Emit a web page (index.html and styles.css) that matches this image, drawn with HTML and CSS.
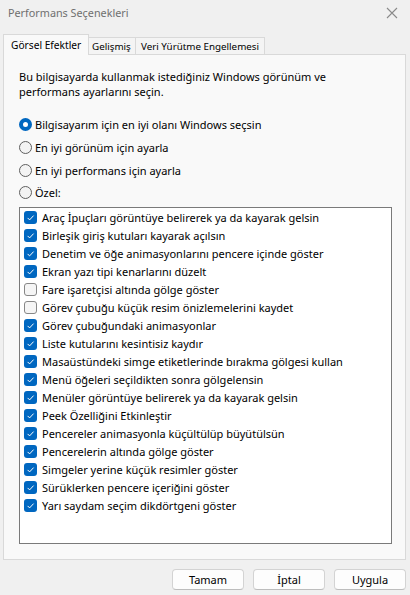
FILE: index.html
```html
<!DOCTYPE html>
<html lang="tr">
<head>
<meta charset="utf-8">
<title>Performans Seçenekleri</title>
<link rel="stylesheet" href="styles.css">
</head>
<body>
<div class="window">
  <div class="titlebar">
    <span class="title">Performans Seçenekleri</span>
    <svg class="close" width="12" height="12" viewBox="0 0 12 12"><path d="M1 1L11 11M11 1L1 11" stroke="#8a8a8a" stroke-width="1.1" fill="none"/></svg>
  </div>
  <div class="tabs">
    <div class="tab active tab-visual">Görsel Efektler</div>
    <div class="tab tab-adv">Gelişmiş</div>
    <div class="tab tab-dep">Veri Yürütme Engellemesi</div>
  </div>
  <div class="panel">
    <p class="desc">Bu bilgisayarda kullanmak istediğiniz Windows görünüm ve performans ayarlarını seçin.</p>
    <div class="radios">
      <div class="radio-row"><span class="radio on"></span><span>Bilgisayarım için en iyi olanı Windows seçsin</span></div>
      <div class="radio-row"><span class="radio"></span><span>En iyi görünüm için ayarla</span></div>
      <div class="radio-row"><span class="radio"></span><span>En iyi performans için ayarla</span></div>
      <div class="radio-row"><span class="radio"></span><span>Özel:</span></div>
    </div>
    <div class="list">
      <div class="item"><span class="cb on"><svg viewBox="0 0 13 13"><path d="M3.6 6.9L5.6 8.9L9.6 4.6"/></svg></span>Araç İpuçları görüntüye belirerek ya da kayarak gelsin</div>
      <div class="item"><span class="cb on"><svg viewBox="0 0 13 13"><path d="M3.6 6.9L5.6 8.9L9.6 4.6"/></svg></span>Birleşik giriş kutuları kayarak açılsın</div>
      <div class="item"><span class="cb on"><svg viewBox="0 0 13 13"><path d="M3.6 6.9L5.6 8.9L9.6 4.6"/></svg></span>Denetim ve öğe animasyonlarını pencere içinde göster</div>
      <div class="item"><span class="cb on"><svg viewBox="0 0 13 13"><path d="M3.6 6.9L5.6 8.9L9.6 4.6"/></svg></span>Ekran yazı tipi kenarlarını düzelt</div>
      <div class="item"><span class="cb"></span>Fare işaretçisi altında gölge göster</div>
      <div class="item"><span class="cb"></span>Görev çubuğu küçük resim önizlemelerini kaydet</div>
      <div class="item"><span class="cb on"><svg viewBox="0 0 13 13"><path d="M3.6 6.9L5.6 8.9L9.6 4.6"/></svg></span>Görev çubuğundaki animasyonlar</div>
      <div class="item"><span class="cb on"><svg viewBox="0 0 13 13"><path d="M3.6 6.9L5.6 8.9L9.6 4.6"/></svg></span>Liste kutularını kesintisiz kaydır</div>
      <div class="item"><span class="cb on"><svg viewBox="0 0 13 13"><path d="M3.6 6.9L5.6 8.9L9.6 4.6"/></svg></span>Masaüstündeki simge etiketlerinde bırakma gölgesi kullan</div>
      <div class="item"><span class="cb on"><svg viewBox="0 0 13 13"><path d="M3.6 6.9L5.6 8.9L9.6 4.6"/></svg></span>Menü öğeleri seçildikten sonra gölgelensin</div>
      <div class="item"><span class="cb on"><svg viewBox="0 0 13 13"><path d="M3.6 6.9L5.6 8.9L9.6 4.6"/></svg></span>Menüler görüntüye belirerek ya da kayarak gelsin</div>
      <div class="item"><span class="cb on"><svg viewBox="0 0 13 13"><path d="M3.6 6.9L5.6 8.9L9.6 4.6"/></svg></span>Peek Özelliğini Etkinleştir</div>
      <div class="item"><span class="cb on"><svg viewBox="0 0 13 13"><path d="M3.6 6.9L5.6 8.9L9.6 4.6"/></svg></span>Pencereler animasyonla küçültülüp büyütülsün</div>
      <div class="item"><span class="cb on"><svg viewBox="0 0 13 13"><path d="M3.6 6.9L5.6 8.9L9.6 4.6"/></svg></span>Pencerelerin altında gölge göster</div>
      <div class="item"><span class="cb on"><svg viewBox="0 0 13 13"><path d="M3.6 6.9L5.6 8.9L9.6 4.6"/></svg></span>Simgeler yerine küçük resimler göster</div>
      <div class="item"><span class="cb on"><svg viewBox="0 0 13 13"><path d="M3.6 6.9L5.6 8.9L9.6 4.6"/></svg></span>Sürüklerken pencere içeriğini göster</div>
      <div class="item"><span class="cb on"><svg viewBox="0 0 13 13"><path d="M3.6 6.9L5.6 8.9L9.6 4.6"/></svg></span>Yarı saydam seçim dikdörtgeni göster</div>
    </div>
  </div>
  <div class="buttons">
    <button class="btn">Tamam</button>
    <button class="btn">İptal</button>
    <button class="btn">Uygula</button>
  </div>
</div>
</body>
</html>
```
FILE: styles.css
```css
html, body {
  margin: 0;
  padding: 0;
  background: #f0f0f0;
}
body {
  font-family: "Noto Sans", "Liberation Sans", sans-serif;
  font-size: 11px;
  color: #000;
}
.window {
  width: 410px;
  height: 595px;
  overflow: hidden;
}
.titlebar {
  height: 35px;
  display: flex;
  align-items: flex-start;
  justify-content: space-between;
  padding: 5px 12px 0 8px;
  box-sizing: border-box;
}
.title {
  color: #6f6f6f;
  font-size: 10.8px;
  line-height: 16px;
}
.close {
  margin-top: 2px;
}
.tabs {
  display: flex;
  align-items: flex-end;
  height: 19px;
  padding-left: 3px;
}
.tab {
  height: 17px;
  line-height: 17px;
  font-size: 9.8px;
  border: 1px solid #d9d9d9;
  border-bottom: none;
  background: #f4f4f4;
  box-sizing: border-box;
  margin-left: -1px;
  white-space: nowrap;
}
.tab-visual {
  width: 86px;
  padding-left: 7px;
  margin-left: 0;
}
.tab-adv {
  width: 48px;
  padding-left: 3px;
}
.tab-dep {
  width: 130px;
  padding-left: 5px;
}
.tab.active {
  height: 21px;
  line-height: 21px;
  font-size: 10.2px;
  background: #f9f9f9;
  margin-bottom: -1px;
  position: relative;
  z-index: 1;
}
.panel {
  width: 403px;
  height: 506px;
  margin-left: 3px;
  box-sizing: border-box;
  border: 1px solid #d9d9d9;
  background: #f9f9f9;
  padding: 14px 0 0 15px;
}
.desc {
  margin: 0;
  width: 330px;
  line-height: 15px;
}
.radios {
  margin-top: 14.67px;
}
.radio-row {
  height: 22.67px;
  display: flex;
  align-items: center;
  gap: 3px;
}
.radio {
  width: 13px;
  height: 13px;
  box-sizing: border-box;
  border-radius: 50%;
  border: 1px solid #5f5f5f;
  background: #f3f3f3;
  flex: none;
}
.radio.on {
  border: 4px solid #0067c0;
  background: #fff;
}
.list {
  margin-top: 2.67px;
  width: 373px;
  height: 337px;
  box-sizing: border-box;
  border: 1px solid #7a7a7a;
  background: #fff;
  padding: 0.7px 0 0 4px;
}
.item {
  height: 18px;
  display: flex;
  align-items: center;
  gap: 5px;
  white-space: nowrap;
}
.cb {
  width: 13px;
  height: 13px;
  box-sizing: border-box;
  border-radius: 3px;
  border: 1px solid #878787;
  background: #f5f5f5;
  flex: none;
  display: flex;
}
.cb.on {
  border: none;
  background: #0067c0;
}
.cb svg {
  width: 13px;
  height: 13px;
}
.cb svg path {
  fill: none;
  stroke: #fff;
  stroke-width: 1;
}
.buttons {
  display: flex;
  justify-content: flex-end;
  gap: 9px;
  padding-right: 4px;
  margin-top: 9px;
}
.btn {
  width: 72px;
  height: 21px;
  font-family: "Noto Sans", "Liberation Sans", sans-serif;
  font-size: 11px;
  color: #000;
  background: #fdfdfd;
  border: 1px solid #d3d3d3;
  border-bottom-color: #bdbdbd;
  border-radius: 4px;
  padding: 0;
  line-height: 18px;
}
```
